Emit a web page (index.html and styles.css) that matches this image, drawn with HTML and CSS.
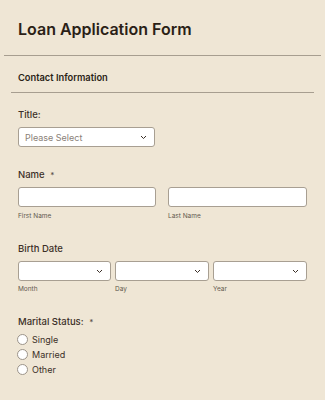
FILE: index.html
```html
<!DOCTYPE html>
<html lang="en">
<head>
    <meta charset="UTF-8">
    <meta name="viewport" content="width=device-width, initial-scale=1.0">
    <title>Loan Application Form</title>
    <link rel="stylesheet" href="styles.css">
</head>
<body>
    <div class="header">
        <h1>Loan Application Form</h1>
    </div>
    <div class="section-head">Contact Information</div>
    <form class="form">
        <div class="field">
            <label class="label" for="title">Title:</label>
            <div class="select title-select">
                <span class="placeholder">Please Select</span>
                <svg class="chevron" width="7" height="5" viewBox="0 0 7 5"><path d="M1 1l2.5 2.5L6 1" fill="none" stroke="#3b2f27" stroke-width="1"/></svg>
            </div>
        </div>
        <div class="field">
            <div class="label">Name <span class="req">*</span></div>
            <div class="row two">
                <div>
                    <input class="input" type="text">
                    <div class="sub">First Name</div>
                </div>
                <div>
                    <input class="input" type="text">
                    <div class="sub">Last Name</div>
                </div>
            </div>
        </div>
        <div class="field">
            <div class="label">Birth Date</div>
            <div class="row three">
                <div>
                    <div class="select"><svg class="chevron" width="7" height="5" viewBox="0 0 7 5"><path d="M1 1l2.5 2.5L6 1" fill="none" stroke="#3b2f27" stroke-width="1"/></svg></div>
                    <div class="sub">Month</div>
                </div>
                <div>
                    <div class="select"><svg class="chevron" width="7" height="5" viewBox="0 0 7 5"><path d="M1 1l2.5 2.5L6 1" fill="none" stroke="#3b2f27" stroke-width="1"/></svg></div>
                    <div class="sub">Day</div>
                </div>
                <div>
                    <div class="select"><svg class="chevron" width="7" height="5" viewBox="0 0 7 5"><path d="M1 1l2.5 2.5L6 1" fill="none" stroke="#3b2f27" stroke-width="1"/></svg></div>
                    <div class="sub">Year</div>
                </div>
            </div>
        </div>
        <div class="field">
            <div class="label">Marital Status: <span class="req">*</span></div>
            <div class="radios">
                <label class="radio"><span class="dot"></span>Single</label>
                <label class="radio"><span class="dot"></span>Married</label>
                <label class="radio"><span class="dot"></span>Other</label>
            </div>
        </div>
    </form>
</body>
</html>
```

FILE: styles.css
```css
body {
    font-family: Inter, "Noto Sans", sans-serif;
    margin: 0;
    padding: 0;
    background-color: #efe6d5;
    color: #3b2f27;
}
.header {
    margin: 0 4px;
    padding: 18px 14px 14px;
    border-bottom: 1px solid #a79e90;
}
.header h1 {
    margin: 0;
    font-size: 16px;
    line-height: 23px;
    font-weight: 600;
    color: #2b1f17;
}
.section-head {
    margin: 0 11px;
    padding: 15px 7px 7px;
    font-size: 9.3px;
    line-height: 14px;
    font-weight: 600;
    color: #2b1f17;
    border-bottom: 1px solid #a79e90;
}
.form {
    padding: 0 18px;
}
.field {
    margin-top: 21px;
}
.field:first-child {
    margin-top: 15px;
}
.label {
    display: block;
    font-size: 9.5px;
    line-height: 14px;
    font-weight: 500;
    margin-bottom: 5px;
}
.req {
    margin-left: 3px;
    font-size: 8px;
    color: #5a4f45;
}
.select, .input {
    box-sizing: border-box;
    height: 20px;
    background-color: #fff;
    border: 1px solid #a89f92;
    border-radius: 3px;
}
.select {
    display: flex;
    align-items: center;
    justify-content: space-between;
    padding: 0 7px 0 6px;
}
.select .chevron {
    margin-left: auto;
}
.title-select {
    width: 137px;
}
.placeholder {
    font-size: 9px;
    color: #8a8178;
}
.input {
    display: block;
    width: 100%;
    margin: 0;
    padding: 0 6px;
}
.row {
    display: grid;
}
.row.two {
    grid-template-columns: 138px 139px;
    gap: 12px;
}
.row.three {
    grid-template-columns: 93px 94px 94px;
    gap: 4px;
}
.sub {
    margin-top: 4px;
    font-size: 6.5px;
    line-height: 10px;
    color: #62594f;
}
.row.three .sub {
    margin-top: 3px;
}
.radios {
    display: flex;
    flex-direction: column;
    margin-top: -2px;
}
.radio {
    display: flex;
    align-items: center;
    gap: 4px;
    height: 15px;
    font-size: 9px;
    color: #3b2f27;
}
.dot {
    box-sizing: border-box;
    width: 11px;
    height: 11px;
    margin-left: -1px;
    border: 1px solid #9c948a;
    border-radius: 50%;
    background-color: #fff;
}
```
